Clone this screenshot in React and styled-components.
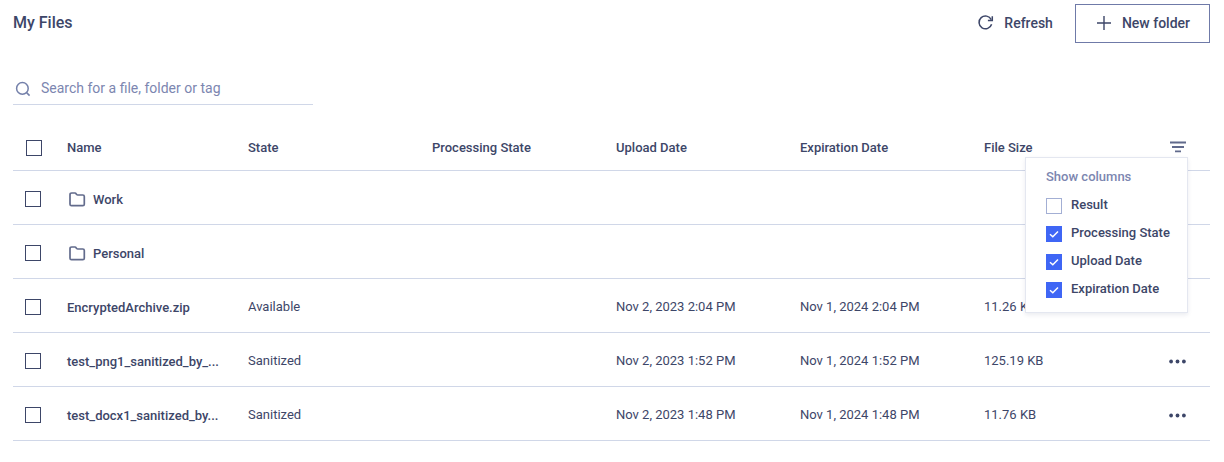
import React, { useState } from 'react';
import styled, { createGlobalStyle } from 'styled-components';

const GlobalStyle = createGlobalStyle`
  * {
    box-sizing: border-box;
  }
  body {
    margin: 0;
    background-color: #ffffff;
    color: #3d4668;
    font-family: Roboto, "Liberation Sans", sans-serif;
    font-size: 13px;
    line-height: 20px;
  }
  button, input {
    font: inherit;
    color: inherit;
  }
`;

const Page = styled.main`
  padding: 4px 14px 20px 13px;
`;

const Header = styled.header`
  display: flex;
  justify-content: space-between;
  align-items: flex-start;
`;

const Title = styled.h1`
  margin: 0;
  padding-top: 9px;
  font-size: 16px;
  font-weight: 500;
  line-height: 20px;
`;

const Actions = styled.div`
  display: flex;
  gap: 22px;
`;

const ActionButton = styled.button`
  display: flex;
  align-items: center;
  gap: 10px;
  height: 39px;
  padding: ${(props) => (props.$outlined ? '0 19px 2px 20px' : '0 0 2px')};
  border: ${(props) => (props.$outlined ? '1px solid #6f7aa8' : 'none')};
  background: none;
  font-size: 14px;
  font-weight: 500;
  cursor: pointer;
`;

const Search = styled.label`
  display: flex;
  align-items: center;
  gap: 10px;
  width: 300px;
  height: 32px;
  margin-top: 30px;
  padding-left: 2px;
  border-bottom: 1px solid #d0d7e8;
  color: #7c86b0;

  input {
    flex: 1;
    min-width: 0;
    padding: 0 0 2px;
    border: none;
    outline: none;
    background: none;
    font-size: 14px;
  }
  input::placeholder {
    color: #7c86b0;
    opacity: 1;
  }
`;

const Table = styled.table`
  width: 100%;
  margin-top: 20px;
  table-layout: fixed;
  border-collapse: separate;
  border-spacing: 0;
`;

const HeadCell = styled.th`
  width: ${(props) => props.$width || 'auto'};
  height: 46px;
  padding: 0;
  border-bottom: 1px solid #d0d7e8;
  text-align: left;
  font-weight: 500;
`;

const Cell = styled.td`
  height: 54px;
  padding: ${(props) => (props.$strong ? '4px 0 0' : '2px 0 0')};
  border-bottom: 1px solid #d0d7e8;
  font-weight: ${(props) => (props.$strong ? 500 : 400)};
  white-space: nowrap;
`;

const CheckHead = styled(HeadCell)`
  padding-left: 13px;
`;

const CheckCell = styled(Cell)`
  padding: 3px 0 0 12px;
`;

const Checkbox = styled.input`
  display: block;
  flex: none;
  appearance: none;
  width: 16px;
  height: 16px;
  margin: 0;
  border: 1px solid ${(props) => (props.$light ? '#a3afd4' : '#3d4668')};
  background: #ffffff;
  cursor: pointer;

  &:checked {
    border-color: #3f66f5;
    background: #3f66f5;
  }
`;

const FileName = styled.span`
  display: flex;
  align-items: center;
  gap: 7px;
  padding-left: ${(props) => (props.$folder ? '2px' : '0')};
`;

const IconButton = styled.button`
  display: flex;
  align-items: center;
  justify-content: center;
  width: 18px;
  height: 16px;
  padding: 0;
  border: none;
  background: none;
  cursor: pointer;
`;

const MenuAnchor = styled.div`
  position: relative;
  padding: 0 0 2px 1px;
`;

const ColumnsMenu = styled.fieldset`
  position: absolute;
  top: 18px;
  right: 22px;
  z-index: 1;
  width: 163px;
  margin: 0;
  padding: 9px 0 8px 20px;
  border: 1px solid #e4e7f0;
  background: #ffffff;
  box-shadow: 0 2px 4px rgba(61, 70, 104, 0.1);
`;

const MenuTitle = styled.div`
  margin-bottom: 5px;
  color: #7c86b0;
  font-weight: 500;
`;

const MenuItem = styled.label`
  display: flex;
  align-items: flex-end;
  gap: 9px;
  height: 28px;
  padding-bottom: 5px;
  font-weight: 500;
  cursor: pointer;
`;

const CheckBoxWrap = styled.span`
  display: grid;
  padding-bottom: 1px;

  > * {
    grid-area: 1 / 1;
  }
  svg {
    pointer-events: none;
  }
`;

const RefreshIcon = () => (
  <svg width="17" height="17" viewBox="0 0 17 17" fill="none" stroke="#3d4668" strokeWidth="1.5">
    <path d="M14.6 10.2A6.4 6.4 0 1 1 14.2 5.6" />
    <path d="M15.3 2.2v4.2h-4.4" />
  </svg>
);

const PlusIcon = () => (
  <svg width="16" height="16" viewBox="0 0 16 16" stroke="#3d4668" strokeWidth="1.4">
    <path d="M8 1v14M1 8h14" />
  </svg>
);

const SearchIcon = () => (
  <svg width="16" height="16" viewBox="0 0 16 16" fill="none" stroke="#7480aa" strokeWidth="1.5">
    <circle cx="7.4" cy="7.4" r="5.8" />
    <path d="M11.6 11.6l3 3" />
  </svg>
);

const FolderIcon = () => (
  <svg width="17" height="15" viewBox="0 0 17 15" fill="none" stroke="#626b8c" strokeWidth="1.7">
    <path d="M1 2.7Q1 1 2.7 1h3.2q.8 0 1.2.7l.5.7q.4.6 1.2.6h5q1.5 0 1.5 1.5v7.7q0 1.5-1.5 1.5H2.5Q1 13.7 1 12.2z" />
  </svg>
);

const FilterIcon = () => (
  <svg width="16" height="12" viewBox="0 0 16 12" stroke="#616a8c" strokeWidth="1.8">
    <path d="M0 1.5h16M2 6h12M5 10.3h6" />
  </svg>
);

const DotsIcon = () => (
  <svg width="17" height="5" viewBox="0 0 17 5" fill="#3d4668">
    <circle cx="2.1" cy="2.5" r="1.9" />
    <circle cx="8.5" cy="2.5" r="1.9" />
    <circle cx="14.9" cy="2.5" r="1.9" />
  </svg>
);

const TickIcon = () => (
  <svg width="16" height="16" viewBox="0 0 16 16" fill="none" stroke="#ffffff" strokeWidth="1.5">
    <path d="M4 8.2l2.8 2.5L12 5.5" />
  </svg>
);

const files = [
  { name: 'Work', folder: true },
  { name: 'Personal', folder: true },
  {
    name: 'EncryptedArchive.zip',
    state: 'Available',
    uploaded: 'Nov 2, 2023 2:04 PM',
    expires: 'Nov 1, 2024 2:04 PM',
    size: '11.26 KB',
  },
  {
    name: 'test_png1_sanitized_by_...',
    state: 'Sanitized',
    uploaded: 'Nov 2, 2023 1:52 PM',
    expires: 'Nov 1, 2024 1:52 PM',
    size: '125.19 KB',
    menu: true,
  },
  {
    name: 'test_docx1_sanitized_by...',
    state: 'Sanitized',
    uploaded: 'Nov 2, 2023 1:48 PM',
    expires: 'Nov 1, 2024 1:48 PM',
    size: '11.76 KB',
    menu: true,
  },
];

const options = ['Result', 'Processing State', 'Upload Date', 'Expiration Date'];

function App() {
  const [open, setOpen] = useState(true);
  const [shown, setShown] = useState(options.slice(1));

  const toggle = (option) => {
    setShown(shown.includes(option) ? shown.filter((o) => o !== option) : [...shown, option]);
  };

  const columns = [
    { label: 'State', field: 'state' },
    { label: 'Result', field: 'result' },
    { label: 'Processing State', field: 'processing' },
    { label: 'Upload Date', field: 'uploaded' },
    { label: 'Expiration Date', field: 'expires' },
    { label: 'File Size', field: 'size' },
  ].filter((c) => !options.includes(c.label) || shown.includes(c.label));

  return (
    <Page>
      <GlobalStyle />
      <Header>
        <Title>My Files</Title>
        <Actions>
          <ActionButton type="button">
            <RefreshIcon />
            Refresh
          </ActionButton>
          <ActionButton type="button" $outlined>
            <PlusIcon />
            New folder
          </ActionButton>
        </Actions>
      </Header>

      <Search>
        <SearchIcon />
        <input type="text" aria-label="Search" placeholder="Search for a file, folder or tag" />
      </Search>

      <Table>
        <thead>
          <tr>
            <CheckHead $width="54px">
              <Checkbox type="checkbox" aria-label="Select all" />
            </CheckHead>
            <HeadCell $width="181px">Name</HeadCell>
            {columns.map((c) => (
              <HeadCell key={c.field}>{c.label}</HeadCell>
            ))}
            <HeadCell $width="42px">
              <MenuAnchor>
                <IconButton type="button" aria-label="Columns" onClick={() => setOpen(!open)}>
                  <FilterIcon />
                </IconButton>
                {open && (
                  <ColumnsMenu aria-label="Show columns">
                    <MenuTitle>Show columns</MenuTitle>
                    {options.map((option) => (
                      <MenuItem key={option}>
                        <CheckBoxWrap>
                          <Checkbox
                            type="checkbox"
                            $light
                            checked={shown.includes(option)}
                            onChange={() => toggle(option)}
                          />
                          {shown.includes(option) && <TickIcon />}
                        </CheckBoxWrap>
                        <span>{option}</span>
                      </MenuItem>
                    ))}
                  </ColumnsMenu>
                )}
              </MenuAnchor>
            </HeadCell>
          </tr>
        </thead>
        <tbody>
          {files.map((file) => (
            <tr key={file.name}>
              <CheckCell>
                <Checkbox type="checkbox" aria-label={'Select ' + file.name} />
              </CheckCell>
              <Cell $strong>
                <FileName $folder={file.folder}>
                  {file.folder && <FolderIcon />}
                  {file.name}
                </FileName>
              </Cell>
              {columns.map((c) => (
                <Cell key={c.field}>{file[c.field]}</Cell>
              ))}
              <Cell $strong>
                {file.menu && (
                  <IconButton type="button" aria-label="More actions">
                    <DotsIcon />
                  </IconButton>
                )}
              </Cell>
            </tr>
          ))}
        </tbody>
      </Table>
    </Page>
  );
}

export default App;
